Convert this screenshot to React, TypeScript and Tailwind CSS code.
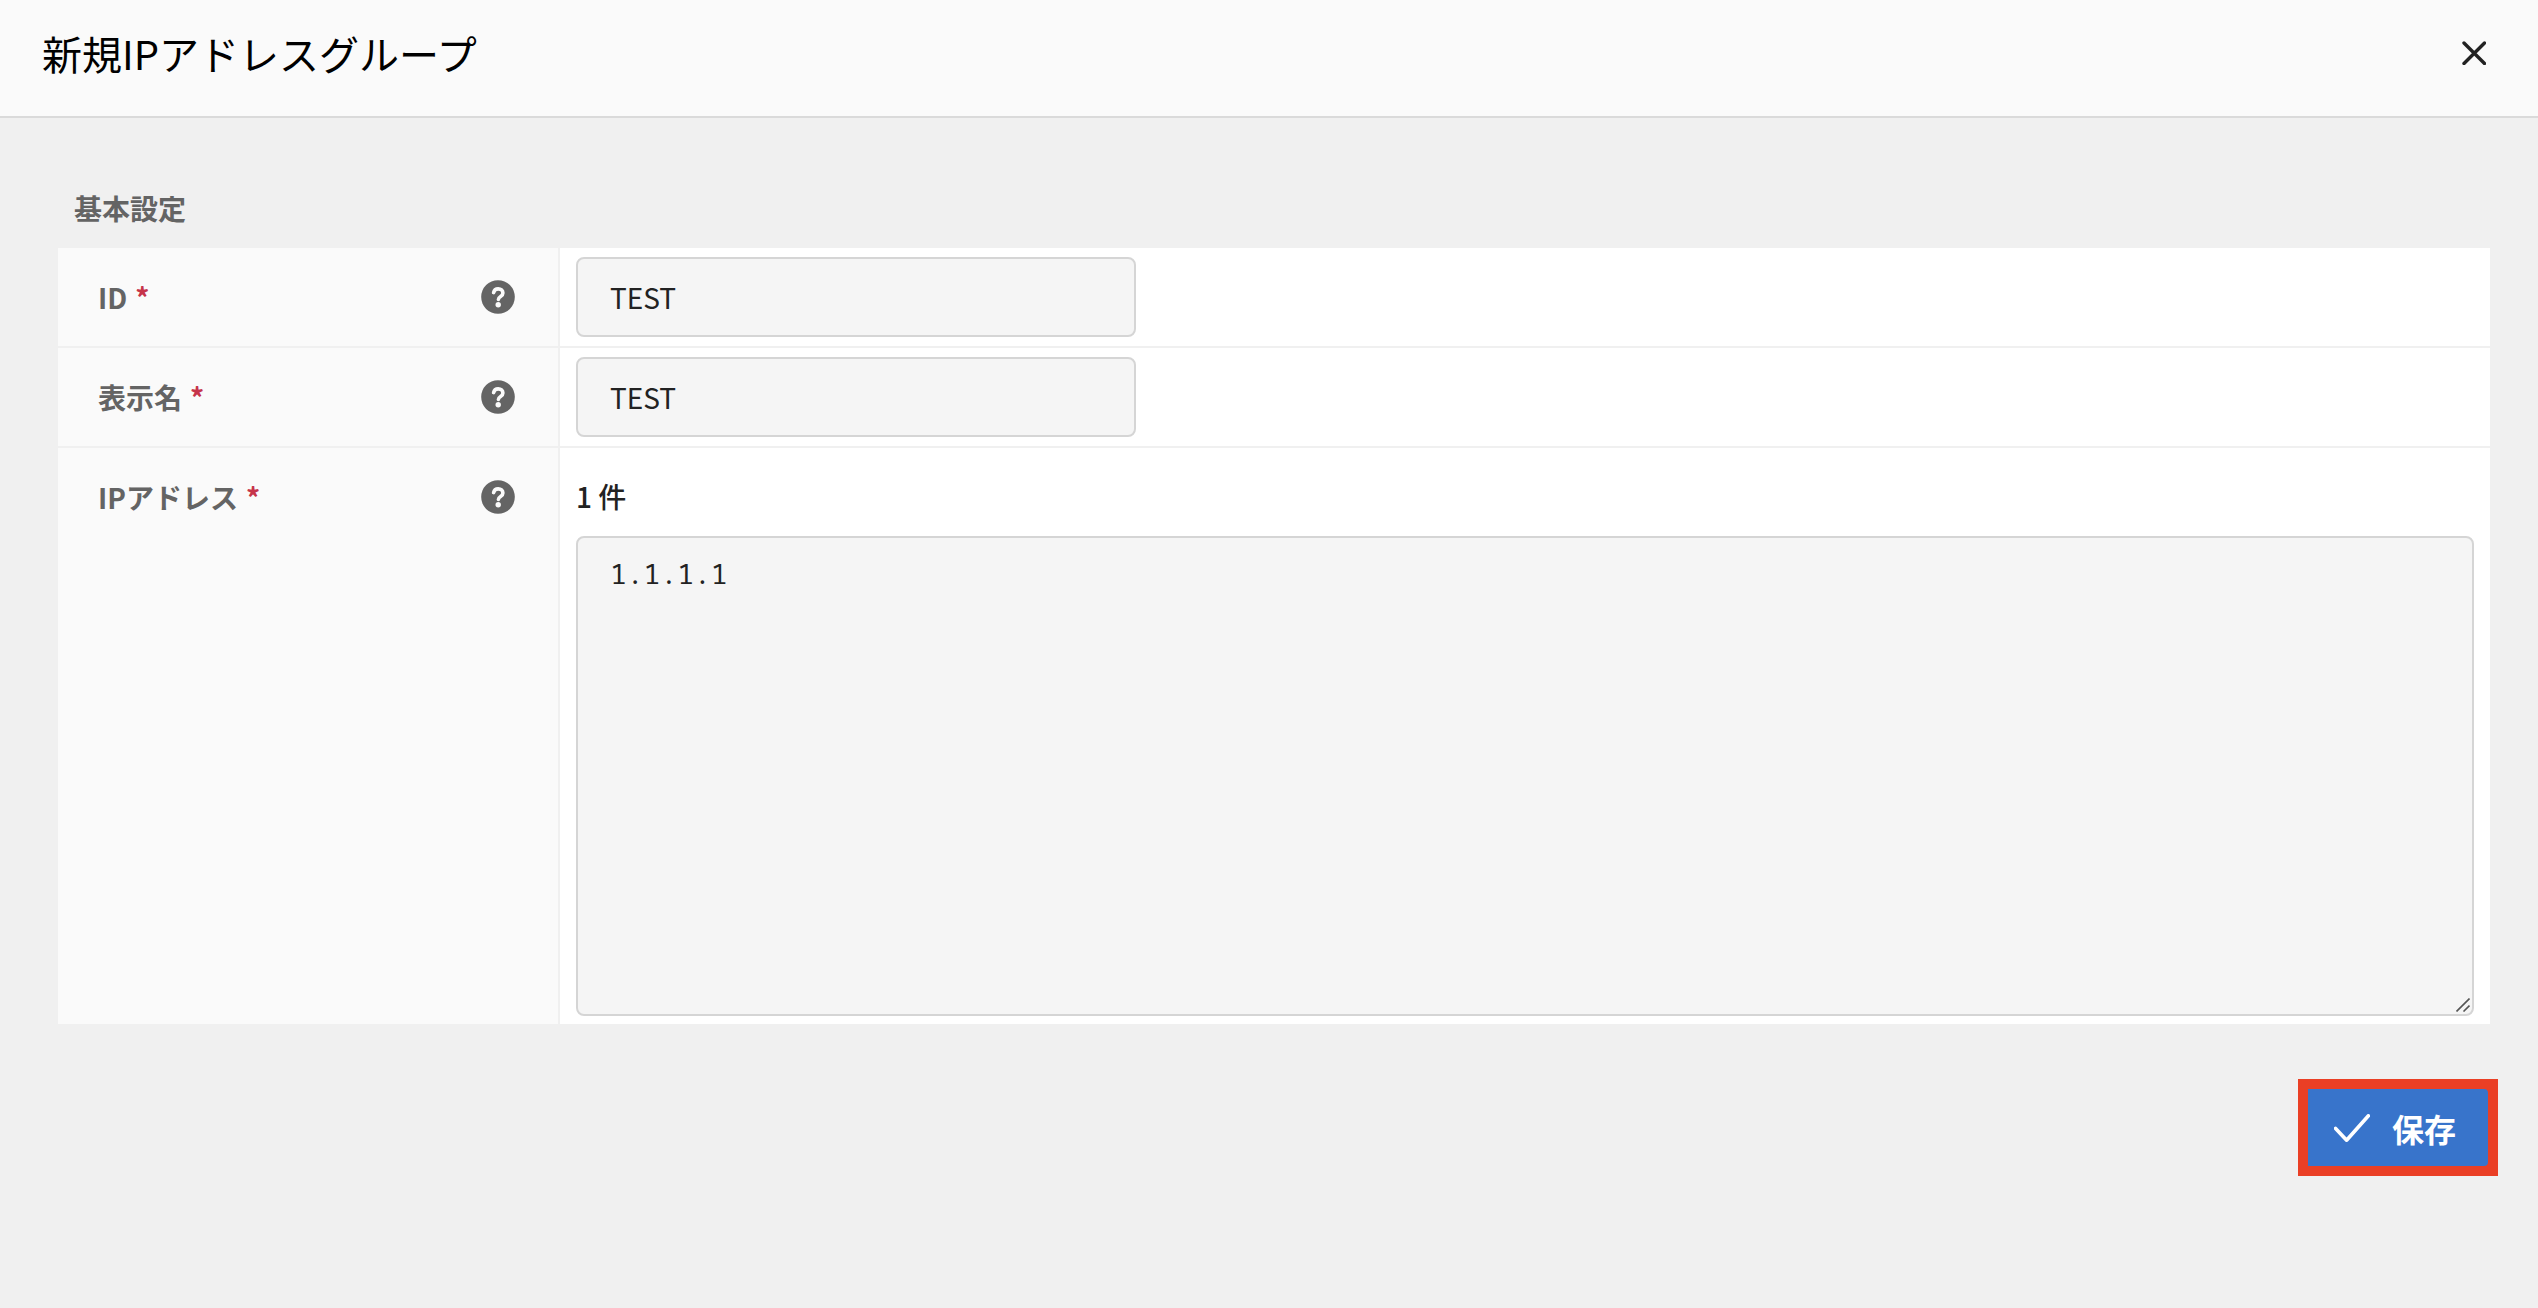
import React, { useState } from 'react';

interface FieldRowProps {
    id: string;
    label: string;
    last?: boolean;
    children: React.ReactNode;
}

const HelpIcon: React.FC = () => (
    <svg className="w-[34px] h-[34px]" viewBox="0 0 34 34" fill="none">
        <circle cx="17" cy="17" r="16.8" fill="#646464" />
        <path d="M12.600 12.600c.5-2.400 2.100-3.700 4.600-3.700 2.700 0 4.700 1.600 4.700 4 0 1.700-.9 2.700-2.300 3.600-1.500 1-2.200 1.700-2.200 3" stroke="#fafafa" strokeWidth="3.6" strokeLinecap="round" />
        <circle cx="17.200" cy="24.800" r="2.700" fill="#fafafa" />
    </svg>
);

const FieldRow: React.FC<FieldRowProps> = ({ id, label, last, children }) => (
    <div className={`flex ${last ? '' : 'border-b-2 border-[#f0f0f0]'}`}>
        <div className="w-[502px] shrink-0 bg-[#fafafa] border-r-2 border-[#f0f0f0] pl-10 pr-[43px]">
            <div className="h-[98px] flex items-center justify-between">
                <label htmlFor={id} className="flex gap-2 text-[28px] leading-[42px] font-bold text-[#646464]">
                    {label}
                    <span className="text-[#c6344a]">*</span>
                </label>
                <button type="button" aria-label={`${label} ヘルプ`}>
                    <HelpIcon />
                </button>
            </div>
        </div>
        <div className="flex-1 min-w-0 bg-white">{children}</div>
    </div>
);

const inputClass = 'block w-[560px] h-20 rounded-lg border-2 border-[#d5d5d5] bg-[#f5f5f5] px-8 text-[28px] leading-[42px] text-[#222] outline-none';

const App: React.FC = () => {
    const [groupId, setGroupId] = useState('TEST');
    const [displayName, setDisplayName] = useState('TEST');
    const [addresses, setAddresses] = useState('1.1.1.1');

    const count = addresses.split('\n').filter((line) => line.trim()).length;

    return (
        <div className="min-h-screen bg-[#f0f0f0] text-[#222] font-['Noto_Sans_CJK_JP',sans-serif]">
            {/* Header */}
            <header className="h-[118px] flex items-center justify-between bg-[#fafafa] border-b-2 border-[#dadada] pl-[42px] pr-12 pb-2.5">
                <h1 className="text-[40px] leading-[60px] text-black">新規IPアドレスグループ</h1>
                <button type="button" aria-label="閉じる" className="p-1">
                    <svg className="w-6 h-6" viewBox="0 0 24 24" fill="none" stroke="#222" strokeWidth="3.4" strokeLinecap="round">
                        <path d="M2 2l20.500 20.500M22.500 2L2 22.500" />
                    </svg>
                </button>
            </header>

            <form className="pt-[69px] pl-[58px] pr-12" onSubmit={(e) => e.preventDefault()}>
                <h2 className="h-[61px] pl-4 text-[28px] leading-[42px] font-bold text-[#646464]">基本設定</h2>

                {/* Fields */}
                <div>
                    <FieldRow id="group-id" label="ID">
                        <div className="px-4 py-[9px]">
                            <input id="group-id" type="text" className={inputClass} value={groupId} onChange={(e) => setGroupId(e.target.value)} />
                        </div>
                    </FieldRow>
                    <FieldRow id="display-name" label="表示名">
                        <div className="px-4 py-[9px]">
                            <input id="display-name" type="text" className={inputClass} value={displayName} onChange={(e) => setDisplayName(e.target.value)} />
                        </div>
                    </FieldRow>
                    <FieldRow id="ip-addresses" label="IPアドレス" last>
                        <div className="px-4 py-2">
                            <p className="text-[28px] leading-[80px] font-medium">{count} 件</p>
                            <div className="relative">
                                <textarea
                                    id="ip-addresses"
                                    className="block w-full h-[480px] resize-none rounded-lg border-2 border-[#d5d5d5] bg-[#f5f5f5] px-8 py-3.5 text-[28px] leading-[42px] text-[#222] outline-none font-['Noto_Sans_Mono','Roboto_Mono','Liberation_Mono',monospace]"
                                    value={addresses}
                                    onChange={(e) => setAddresses(e.target.value)}
                                />
                                <svg className="absolute right-1 bottom-1 w-[14px] h-[14px] pointer-events-none" viewBox="0 0 14 14" stroke="#555" strokeWidth="1.600">
                                    <path d="M.5 13.500L13.500 .5M7.500 13.500l6-6" />
                                </svg>
                            </div>
                        </div>
                    </FieldRow>
                </div>

                {/* Actions */}
                <div className="flex justify-end mt-[55px] -mr-2">
                    <div className="border-[10px] border-[#ea3f25] bg-[#ea3f25]">
                        <button type="submit" className="w-[180px] h-[77px] flex items-center gap-[22px] pl-[26px] bg-[#3874cb] text-white text-[32px] leading-[48px] font-bold rounded-r-sm">
                            <svg className="w-9 h-7" viewBox="0 0 36 28" fill="none" stroke="currentColor" strokeWidth="3.600" strokeLinecap="round" strokeLinejoin="round">
                                <path d="M1.600 14.400L12.600 26.200L34.400 1.800" />
                            </svg>
                            保存
                        </button>
                    </div>
                </div>
            </form>
        </div>
    );
};

export default App;
